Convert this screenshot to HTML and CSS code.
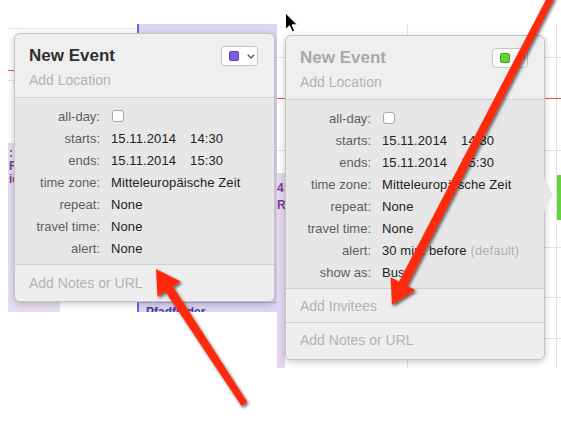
FILE: index.html
```html
<!DOCTYPE html>
<html>
<head>
<meta charset="utf-8">
<title>New Event popovers</title>
<link rel="stylesheet" href="styles.css">
</head>
<body>
<div class="canvas">

  <div class="shot shot-left">
    <div class="hline gray" style="top:4px;left:0;width:129px"></div>
    <div class="hline red" style="top:46px"></div>
    <div class="hline gray" style="top:56px"></div>
    <div class="ev ev-strip-left">
      <span>:</span><span class="b">R</span><span>ic</span>
    </div>
    <div class="ev ev-purple"></div>
    <div class="ev ev-purple2"><span>Pfadfinder</span></div>

    <div class="popover pop-left">
      <div class="pop-head">
        <div class="title-row">
          <span class="title">New Event</span>
          <span class="swatch"><span class="chip chip-purple"></span><svg class="chev" width="8" height="5" viewBox="0 0 8 5"><polyline points="0.8,0.8 4,4 7.2,0.8" fill="none" stroke="#555" stroke-width="1.3"/></svg></span>
        </div>
        <div class="location">Add Location</div>
      </div>
      <div class="pop-body">
        <span class="label">all-day:</span><span class="value"><span class="checkbox"></span></span>
        <span class="label">starts:</span><span class="value">15.11.2014<span class="time">14:30</span></span>
        <span class="label">ends:</span><span class="value">15.11.2014<span class="time">15:30</span></span>
        <span class="label">time zone:</span><span class="value">Mitteleuropäische Zeit</span>
        <span class="label">repeat:</span><span class="value">None</span>
        <span class="label">travel time:</span><span class="value">None</span>
        <span class="label">alert:</span><span class="value">None</span>
      </div>
      <div class="pop-sec sec-foot-left">Add Notes or URL</div>
    </div>
  </div>

  <div class="shot shot-right">
    <div class="vline" style="left:130px"></div>
    <div class="vline" style="left:279px"></div>
    <div class="hline gray" style="top:33px"></div>
    <div class="hline red" style="top:74px"></div>
    <div class="hline gray" style="top:126px"></div>
    <div class="hline gray" style="top:223px"></div>
    <div class="hline gray" style="top:273px"></div>
    <div class="hline gray" style="top:314px"></div>
    <div class="ev ev-strip-right"><span>4:</span><span class="b">R</span></div>
    <div class="ev ev-green"></div>

    <div class="popover pop-right">
      <div class="pop-head">
        <div class="title-row">
          <span class="title">New Event</span>
          <span class="swatch"><span class="chip chip-green"></span><svg class="chev" width="8" height="5" viewBox="0 0 8 5"><polyline points="0.8,0.8 4,4 7.2,0.8" fill="none" stroke="#999" stroke-width="1.3"/></svg></span>
        </div>
        <div class="location">Add Location</div>
      </div>
      <div class="pop-body">
        <span class="label">all-day:</span><span class="value"><span class="checkbox"></span></span>
        <span class="label">starts:</span><span class="value">15.11.2014<span class="time">14:30</span></span>
        <span class="label">ends:</span><span class="value">15.11.2014<span class="time">15:30</span></span>
        <span class="label">time zone:</span><span class="value">Mitteleuropäische Zeit</span>
        <span class="label">repeat:</span><span class="value">None</span>
        <span class="label">travel time:</span><span class="value">None</span>
        <span class="label">alert:</span><span class="value">30 min. before <span class="muted">(default)</span></span>
        <span class="label">show as:</span><span class="value">Busy</span>
      </div>
      <div class="pop-sec sec-mid">Add Invitees</div>
      <div class="pop-sec sec-last">Add Notes or URL</div>
      <div class="pointer"></div>
    </div>
  </div>

  <svg class="overlay" width="561" height="426" viewBox="0 0 561 426">
    <defs>
      <filter id="sh" x="-20%" y="-20%" width="140%" height="140%">
        <feDropShadow dx="1.5" dy="2" stdDeviation="1.7" flood-color="#000" flood-opacity="0.6"/>
      </filter>
    </defs>
    <g filter="url(#sh)" fill="#ff2c10">
      <polygon points="554.8,-2.4 407.0,285.8 415.4,290.1 392,305 390.6,277.3 399.0,281.6 548.6,-5.6"/>
      <polygon points="247.3,402.1 173.0,286.6 180.9,281.4 156,269 157.5,296.8 165.4,291.6 241.5,405.9"/>
    </g>
    <polygon points="285.5,13 285.5,29.5 289.5,25.8 292.3,31.8 294.7,30.8 292,24.8 297.3,24.8" fill="#000" stroke="#fff" stroke-width="1" stroke-linejoin="round"/>
  </svg>
</div>
</body>
</html>
```

FILE: styles.css
```css
html, body {
  margin: 0;
  padding: 0;
  background: #fff;
}

.canvas {
  position: relative;
  width: 561px;
  height: 426px;
  overflow: hidden;
  background: #fff;
  font-family: "Liberation Sans", Arial, Helvetica, sans-serif;
}

.shot {
  position: absolute;
  overflow: hidden;
  background: #fff;
}

.shot-left {
  left: 8px;
  top: 24px;
  width: 269px;
  height: 288px;
}

.shot-right {
  left: 277px;
  top: 24px;
  width: 284px;
  height: 344px;
}

.hline {
  position: absolute;
  left: 0;
  right: 0;
  height: 1px;
}

.hline.gray { background: #e3e3e3; }
.hline.red { background: #f0554a; }

.vline {
  position: absolute;
  top: 0;
  bottom: 0;
  width: 1px;
  background: #e3e3e3;
}

.ev {
  position: absolute;
}

.ev-strip-left {
  left: 0;
  top: 119px;
  width: 52px;
  bottom: 0;
  background: #e7ddf0;
  display: flex;
  flex-direction: column;
  padding: 4px 0 0 1px;
  box-sizing: border-box;
  font-size: 12px;
  line-height: 13px;
  color: #7a3f93;
  font-weight: bold;
}

.ev-purple {
  left: 129px;
  top: 0;
  width: 140px;
  bottom: 0;
  background: #dcd5f4;
  border-left: 2px solid #7a5fe0;
  box-sizing: border-box;
}

.ev-purple2 {
  left: 129px;
  top: 278px;
  width: 140px;
  bottom: 0;
  background: #dcd5f4;
  border-left: 2px solid #7a5fe0;
  border-top: 1px solid #b9ace6;
  box-sizing: border-box;
  padding: 3px 0 0 7px;
  font-size: 12px;
  font-weight: bold;
  color: #4b3c9c;
  line-height: 13px;
}

.ev-strip-right {
  left: 0;
  top: 149px;
  width: 8px;
  bottom: 0;
  background: #e4d7ef;
  display: flex;
  flex-direction: column;
  padding-top: 7px;
  box-sizing: border-box;
  font-size: 12px;
  line-height: 17px;
  font-weight: bold;
  color: #7a3f93;
  white-space: nowrap;
}

.ev-green {
  left: 280px;
  top: 151px;
  width: 4px;
  height: 45px;
  background: #66d23b;
}

.b { font-weight: bold; }

/* Popover */
.popover {
  position: absolute;
  width: 261px;
  box-sizing: border-box;
  border: 1px solid #c4c4c4;
  border-radius: 6px;
  background: #eeeeee;
  box-shadow: 0 2px 7px rgba(0, 0, 0, 0.22);
}

.pop-left {
  left: 6px;
  top: 9px;
}

.pop-right {
  left: 8px;
  top: 11px;
  width: 260px;
}

.pop-head {
  padding: 11px 16px 7px 14px;
  border-bottom: 1px solid #cfcfcf;
  border-radius: 6px 6px 0 0;
  background: #efefef;
}

.title-row {
  display: flex;
  align-items: center;
  justify-content: space-between;
  height: 22px;
}

.title {
  font-size: 17px;
  font-weight: bold;
  color: #2f2f2f;
  line-height: 22px;
}

.pop-right .title {
  color: #a9a9a9;
}

.swatch {
  display: flex;
  align-items: center;
  width: 37px;
  height: 20px;
  box-sizing: border-box;
  padding-left: 7px;
  background: #fff;
  border: 1px solid #c5c5c5;
  border-radius: 4px;
}

.pop-right .swatch {
  width: 36px;
  background: #fbfbfb;
}

.chip {
  width: 10px;
  height: 10px;
  box-sizing: border-box;
  border-radius: 2px;
}

.chip-purple {
  background: #7d5de8;
  border: 1px solid #5d3fc4;
}

.chip-green {
  background: #62d43c;
  border: 1px solid #3e9e22;
}

.chev {
  margin-left: 8px;
  display: block;
}

.location {
  margin-top: 3px;
  font-size: 14px;
  line-height: 20px;
  color: #b3b3b3;
}

.pop-body {
  display: grid;
  grid-template-columns: 85px 1fr;
  column-gap: 11px;
  grid-auto-rows: 22px;
  align-items: center;
  padding: 7px 0 5px 0;
  background: #e7e7e7;
  border-bottom: 1px solid #d0d0d0;
  font-size: 13px;
}

.label {
  text-align: right;
  color: #5e5e5e;
  white-space: nowrap;
}

.value {
  color: #222;
  white-space: nowrap;
  display: flex;
  align-items: center;
  letter-spacing: 0.1px;
}

.time {
  margin-left: 14px;
}

.muted {
  color: #b0b0b0;
  margin-left: 4px;
}

.checkbox {
  display: block;
  width: 12px;
  height: 12px;
  box-sizing: border-box;
  margin-left: 1px;
  background: #fff;
  border: 1px solid #a9a9a9;
  border-radius: 3px;
}

.pop-sec {
  padding: 7px 14px 6px;
  font-size: 14px;
  line-height: 20px;
  color: #b3b3b3;
  background: #eeeeee;
}

.sec-foot-left {
  padding: 8px 14px 8px;
  border-radius: 0 0 6px 6px;
}

.sec-mid {
  border-bottom: 1px solid #d0d0d0;
}

.sec-last {
  padding-bottom: 9px;
  border-radius: 0 0 6px 6px;
}

.pointer {
  position: absolute;
  right: -9px;
  top: 142px;
  width: 9px;
  height: 34px;
  background: #e7e7e7;
  clip-path: polygon(0 0, 100% 50%, 0 100%);
}

.overlay {
  position: absolute;
  left: 0;
  top: 0;
  pointer-events: none;
}
```
